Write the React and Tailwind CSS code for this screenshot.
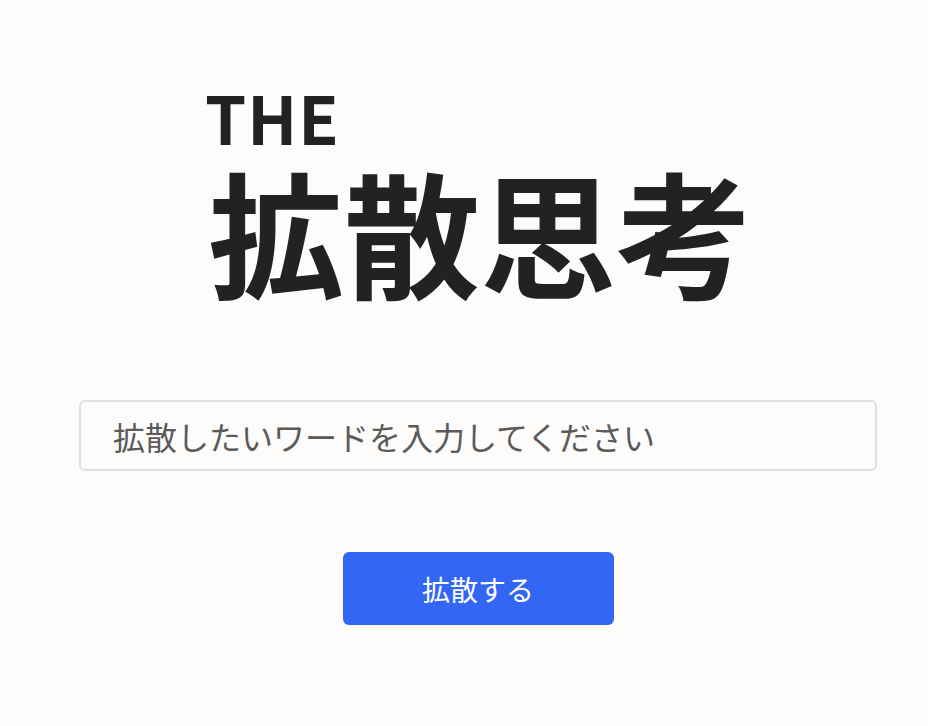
export default function App() {
  return (
    <div
      className="min-h-[726px] w-full bg-[#fdfcfb] text-[#222222]"
      style={{ fontFamily: '"Noto Sans CJK JP", "Noto Sans", sans-serif' }}
    >
      <div className="flex flex-col pl-[79px] pr-[51px] pt-[84px]">
        <div className="flex flex-col pl-[129px]">
          <div className="-ml-[3px] text-[66px] font-bold leading-[64px] tracking-[1px]">THE</div>
          <div className="mt-[7px] text-[136px] font-bold leading-[150px]">拡散思考</div>
        </div>
        <div className="mt-[95px] h-[71px] w-full rounded-[6px] border-2 border-[#e0e0e0] bg-[#fdfcfb] flex items-center pl-[32px]">
          <input
            className="w-full bg-transparent text-[32px] text-[#555555] outline-none placeholder:text-[#5a5a5a]"
            placeholder="拡散したいワードを入力してください"
          />
        </div>
        <div className="mt-[81px] flex justify-center">
          <button className="h-[73px] w-[271px] rounded-[6px] bg-[#3366f5] text-[28px] text-white">
            拡散する
          </button>
        </div>
      </div>
    </div>
  );
}
